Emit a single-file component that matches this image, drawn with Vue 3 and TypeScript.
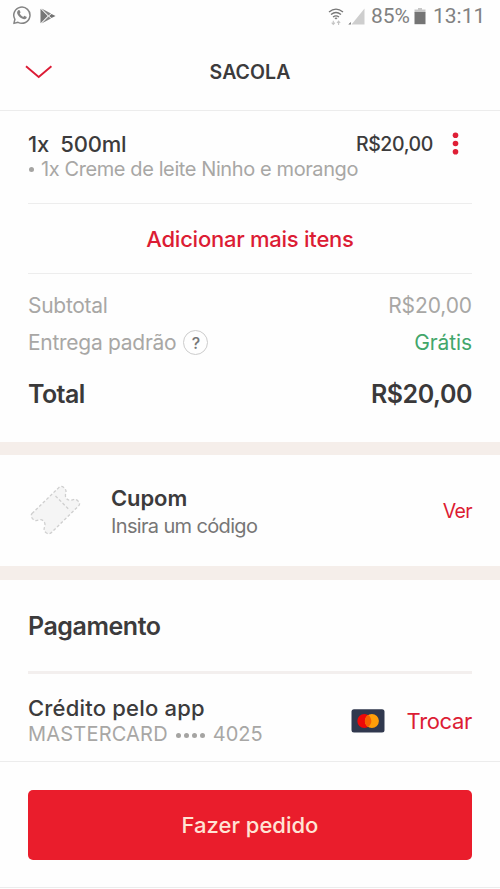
<script setup lang="ts">
interface SummaryRow {
  label: string
  value: string
  help?: boolean
  free?: boolean
}

const summary: SummaryRow[] = [
  { label: 'Subtotal', value: 'R$20,00' },
  { label: 'Entrega padrão', value: 'Grátis', help: true, free: true },
]
</script>

<template>
  <div class="screen">
    <div class="status">
      <svg class="whatsapp" width="20" height="21" viewBox="0 0 20 21" fill="none" stroke="#858585">
        <path d="M1.9 18.4 2.9 14.3A8.1 8.1 0 1 1 6 17.3Z" stroke-width="1.5" stroke-linejoin="round" />
        <path d="M6.3 5.3c.7-.5 1.2-.4 1.5.3l.7 1.6c.1.4-.6 1-.8 1.3.8 1.6 2 2.7 3.6 3.4.5-.4 1-1.2 1.4-1l1.7.9c.6.3.3 1.3-.2 1.8-1 .9-2.6.9-4.7-.3-2-1.1-3.5-2.8-4.2-4.6-.5-1.4 0-2.7 1-3.4Z" fill="#858585" stroke="none" />
      </svg>
      <svg class="play" width="16" height="16" viewBox="0 0 16 16">
        <path d="M.5.8v14.4L7.7 8Z" fill="#777" />
        <path d="M1.5.4 11 5.6 8.5 7.6ZM1.5 15.6 11 10.4 8.5 8.4Z" fill="#858585" />
        <path d="M11.5 5.9 15.5 8l-4 2.1L9.2 8Z" fill="#707070" />
      </svg>
      <span class="spacer"></span>
      <svg class="wifi" width="16" height="18" viewBox="0 0 16 18" fill="none" stroke="#777">
        <path d="M1 4.1Q8-1.9 15 4.1M3 6.6Q8 2.4 13 6.6M5 9Q8 6.6 11 9" stroke-width="1.3" />
        <path d="m6.4 10 1.6 1.6L9.6 10Q8 9 6.4 10Z" fill="#777" stroke="none" />
        <path d="M5.3 12.7v3.5M3.7 14.7l1.6 1.8 1.6-1.8M10.6 17v-3.5M9 15l1.6-1.8 1.6 1.8" stroke="#c4c4c4" stroke-width="1.1" />
      </svg>
      <svg class="signal" width="17" height="17" viewBox="0 0 17 17">
        <path d="M16.5.5v16H3.5Z" fill="#cecece" />
        <path d="M2.8 14v2.5H.3Z" fill="#707070" />
      </svg>
      <span class="percent">85%</span>
      <svg class="battery" width="12" height="17" viewBox="0 0 12 17">
        <path d="M4 0h4v1.5h3.5v3H.5v-3H4Z" fill="#c7c7c7" />
        <path d="M.5 4h11v12.2H.5Z" fill="#747474" />
      </svg>
      <span class="clock">13:11</span>
    </div>

    <header class="header">
      <svg class="chevron" width="28" height="14" viewBox="0 0 28 14" fill="none">
        <path d="m1 1.2 12.7 10.7L26.4 1.2" stroke="#dc1b35" stroke-width="1.9" />
      </svg>
      <h1>SACOLA</h1>
    </header>

    <section class="item">
      <div class="item-line">
        <span class="item-name">1x&nbsp; 500ml</span>
        <span class="item-price">R$20,00</span>
        <svg class="more" width="7" height="23" viewBox="0 0 7 23" fill="#df1f36">
          <circle cx="3.5" cy="3.2" r="2.8" />
          <circle cx="3.5" cy="11.5" r="2.8" />
          <circle cx="3.5" cy="19.8" r="2.8" />
        </svg>
      </div>
      <div class="item-detail"><i class="dot"></i><span>1x Creme de leite Ninho e morango</span></div>
    </section>

    <div class="add"><span>Adicionar mais itens</span></div>

    <section class="summary">
      <div v-for="row in summary" :key="row.label" class="row">
        <span class="label">{{ row.label }}</span>
        <span v-if="row.help" class="help">?</span>
        <span class="value" :class="{ free: row.free }">{{ row.value }}</span>
      </div>
      <div class="row total">
        <span class="total-label">Total</span>
        <span class="value total-value">R$20,00</span>
      </div>
    </section>

    <section class="coupon">
      <svg class="ticket" width="52" height="52" viewBox="0 0 52 52" stroke="#cfcfcf" stroke-width="1.3" stroke-dasharray="3 2" stroke-linejoin="round">
        <path d="M2 28.5 28.8 2.6Q31.3.4 33.8 2.5C37 5.3 36 7 35.5 9.5 35 12.7 37.2 15.5 40.3 15.2 43 15 45.2 13 48 16Q50.9 18.6 48.5 21L21.8 47.2Q19.2 50 16.2 47.8C12.5 44.6 14.8 42.6 15 39.8 15 36.3 12 33.8 8.8 35 6.3 36 4.5 36 2.3 33.3Q.3 30.6 2 28.5Z" fill="#f5f5f5" />
        <path d="M25.5 11 39.7 25.2" fill="none" />
      </svg>
      <div class="coupon-copy">
        <h2>Cupom</h2>
        <p>Insira um código</p>
      </div>
      <span class="view">Ver</span>
    </section>

    <section class="payment">
      <h2>Pagamento</h2>
      <div class="method">
        <div class="method-copy">
          <div class="method-name">Crédito pelo app</div>
          <div class="card-number"><span class="brand">MASTERCARD</span><span class="mask"><i></i><i></i><i></i><i></i></span><span class="digits">4025</span></div>
        </div>
        <svg class="card" width="34" height="24" viewBox="0 0 34 24">
          <rect x=".5" y=".3" width="33" height="23.2" rx="2.5" fill="#30384e" />
          <circle cx="13.3" cy="12" r="7" fill="#ee0808" />
          <circle cx="20.9" cy="12" r="7" fill="#ff9e09" />
          <path d="M17.1 6.1a7 7 0 0 1 0 11.8 7 7 0 0 1 0-11.8Z" fill="#f66000" />
        </svg>
        <span class="change">Trocar</span>
      </div>
    </section>

    <footer class="footer">
      <button type="button"><span>Fazer pedido</span></button>
    </footer>
  </div>
</template>

<style>
body {
  margin: 0;
  background: #fff;
}
</style>

<style scoped>
.screen {
  box-sizing: border-box;
  width: 500px;
  height: 889px;
  display: flex;
  flex-direction: column;
  overflow: hidden;
  background: #fefefe;
  color: #3c3b3c;
  font-family: Inter, 'Liberation Sans', sans-serif;
  white-space: nowrap;
}
h1, h2, p {
  margin: 0;
}
svg {
  display: block;
  flex: none;
}
.status {
  height: 33px;
  box-sizing: border-box;
  padding: 0 16px 0 12px;
  display: flex;
  align-items: center;
  color: #818181;
  font: 400 21px/33px Roboto, sans-serif;
}
.play {
  margin-left: 8px;
}
.whatsapp,
.play {
  position: relative;
  top: -1px;
}
.spacer {
  flex: 1;
}
.signal {
  margin: 0 6px 0 4px;
}
.percent {
  width: 38px;
}
.battery {
  margin: 0 7px 0 5px;
}
.clock {
  width: 51px;
}
.header {
  position: relative;
  height: 78px;
  box-sizing: border-box;
  border-bottom: 1px solid #ececec;
  display: flex;
  align-items: center;
  justify-content: center;
}
.chevron {
  position: absolute;
  left: 25px;
  top: 32px;
}
.header h1 {
  font-size: 19.5px;
  font-weight: 600;
  line-height: 24px;
  letter-spacing: 0.05px;
}
.item {
  margin: 0 28px;
  height: 93px;
  box-sizing: border-box;
  padding-top: 20px;
  border-bottom: 1px solid #ededed;
}
.item-line {
  display: flex;
  align-items: center;
  height: 25px;
}
.item-name {
  font-size: 22px;
  font-weight: 450;
  letter-spacing: -0.2px;
}
.item-price {
  margin-left: auto;
  font-size: 19.5px;
  font-weight: 500;
  letter-spacing: -0.4px;
}
.more {
  margin: 0 13px 0 19px;
}
.item-detail {
  display: flex;
  align-items: center;
  height: 25px;
  font-size: 20px;
  letter-spacing: -0.4px;
  color: #a8a7a5;
}
.dot {
  width: 5px;
  height: 5px;
  margin: 2px 7px 0 1px;
  border-radius: 50%;
  background: #a5a4a2;
}
.add {
  margin: 0 28px;
  height: 70px;
  box-sizing: border-box;
  border-bottom: 1px solid #ededed;
  text-align: center;
  font-size: 22px;
  font-weight: 500;
  line-height: 70px;
  letter-spacing: -0.25px;
  color: #dc1c34;
}
.summary {
  height: 168px;
  box-sizing: border-box;
  padding: 13px 28px 0;
}
.row {
  display: flex;
  align-items: center;
  height: 37px;
  font-size: 21px;
  color: #a8a7a5;
}
.label {
  letter-spacing: -0.28px;
}
.help {
  width: 23px;
  height: 23px;
  margin-left: 7px;
  border: 1px solid #ccc;
  border-radius: 50%;
  font-size: 16px;
  font-weight: 500;
  line-height: 24px;
  text-align: center;
  color: #777;
}
.value {
  margin-left: auto;
  letter-spacing: -0.1px;
}
.free {
  color: #42a66b;
}
.total {
  height: 66px;
  color: #3a393a;
  font-size: 25px;
  font-weight: 600;
}
.total-label {
  letter-spacing: -0.6px;
}
.total-value {
  letter-spacing: -0.45px;
}
.coupon {
  height: 138px;
  box-sizing: border-box;
  border: solid #f5eeea;
  border-width: 13px 0 14px;
  padding: 0 28px 0 30px;
  display: flex;
  align-items: center;
}
.coupon-copy {
  margin-left: 29px;
  padding-top: 2px;
}
.coupon-copy h2 {
  font-size: 22px;
  font-weight: 600;
  line-height: 28px;
  letter-spacing: -0.1px;
}
.coupon-copy p {
  font-size: 20px;
  line-height: 28px;
  letter-spacing: -0.65px;
  color: #777676;
}
.view {
  margin-left: auto;
  color: #dc1c34;
  font-size: 19.5px;
  letter-spacing: -0.6px;
}
.payment {
  padding: 0 28px;
  height: 181px;
}
.payment h2 {
  height: 94px;
  box-sizing: border-box;
  border-bottom: 3px solid #f3efee;
  font-size: 25px;
  font-weight: 600;
  line-height: 93px;
  letter-spacing: -0.45px;
}
.method {
  display: flex;
  height: 87px;
  padding-top: 21px;
  box-sizing: border-box;
}
.method-name {
  font-size: 22px;
  font-weight: 450;
  line-height: 26px;
  letter-spacing: 0.2px;
}
.card-number {
  display: flex;
  align-items: center;
  font-size: 20px;
  line-height: 27px;
  color: #a8a7a5;
}
.brand {
  letter-spacing: 0.2px;
}
.mask {
  display: flex;
  gap: 3px;
  margin: 1px 8px 0 8px;
}
.mask i {
  width: 5px;
  height: 5px;
  border-radius: 50%;
  background: #a5a4a2;
}
.card {
  margin: 14px 22px 0 auto;
}
.change {
  font-size: 22px;
  line-height: 52px;
  letter-spacing: -0.35px;
  color: #dc1c34;
}
.footer {
  height: 127px;
  box-sizing: border-box;
  border-top: 1px solid #ececec;
  border-bottom: 1px solid #ececec;
  padding: 28px;
}
button {
  display: block;
  width: 444px;
  height: 70px;
  padding: 0;
  border: 0;
  border-radius: 5px;
  background: #ea1d2c;
  color: #ffe4d5;
  font: 500 22px/70px Inter, sans-serif;
}
</style>
